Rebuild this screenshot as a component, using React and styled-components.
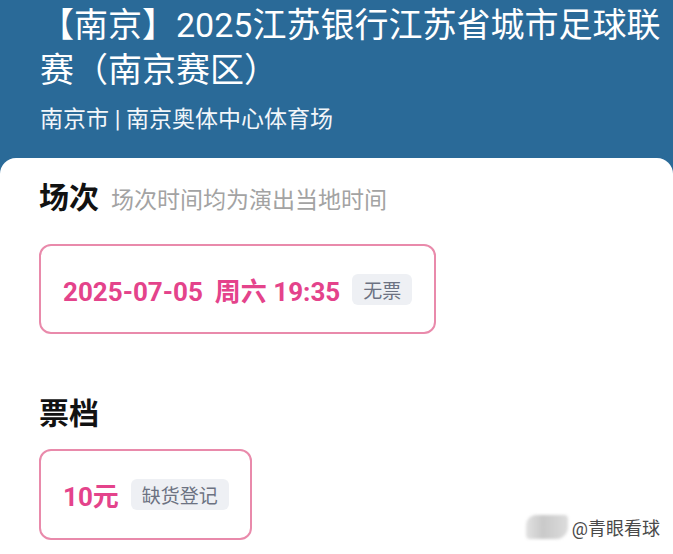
import React from "react"
import styled, { createGlobalStyle } from "styled-components"

const GlobalStyle = createGlobalStyle`
  html, body {
    margin: 0;
    padding: 0;
    background: #ffffff;
  }
  body {
    font-family: Roboto, "Noto Sans CJK SC", "Noto Sans", sans-serif;
  }
`

const Page = styled.div`
  position: relative;
  display: flex;
  flex-direction: column;
  min-height: 100vh;
  background: #2a6a98;
  overflow: hidden;
`

const Header = styled.header`
  padding: 3px 0 0 40px;
  color: #ffffff;
  height: 158px;
  box-sizing: border-box;
`

const Title = styled.h1`
  margin: 0;
  font-size: 34px;
  line-height: 45px;
  font-weight: 400;
`

const Venue = styled.p`
  margin: 12px 0 0;
  font-size: 23px;
  line-height: 30px;
  color: #f2f6fa;
`

const Card = styled.main`
  flex: 1;
  background: #ffffff;
  border-radius: 16px 16px 0 0;
  padding: 20px 0 0 39px;
`

const SectionHead = styled.div`
  display: flex;
  align-items: baseline;
  gap: 12px;
  margin-top: ${(p) => p.$top || 0}px;
`

const HeadTitle = styled.h2`
  margin: 0;
  font-size: 30px;
  line-height: 40px;
  font-weight: 700;
  color: #121212;
`

const HeadNote = styled.span`
  font-size: 23px;
  color: #a3a3a3;
`

const Option = styled.div`
  box-sizing: border-box;
  display: flex;
  align-items: center;
  width: ${(p) => p.$width}px;
  height: ${(p) => p.$height}px;
  margin-top: ${(p) => p.$top}px;
  padding-left: 22px;
  border: 2px solid #e98aab;
  border-radius: 12px;
`

const Price = styled.span`
  font-size: 26px;
  font-weight: 700;
  color: #e4438b;
  white-space: nowrap;
`

const Gap = styled.span`
  margin-left: 12px;
`

const Tag = styled.span`
  margin-left: 12px;
  height: 31px;
  padding: 0 11px;
  display: inline-flex;
  align-items: center;
  background: #eef0f4;
  color: #6c7282;
  font-size: 19px;
  border-radius: 6px;
`

const Watermark = styled.div`
  position: absolute;
  right: 13px;
  bottom: 14px;
  display: flex;
  align-items: center;
  gap: 4px;
  font-size: 18px;
  color: #4a4a4a;
`

const Blur = styled.span`
  width: 42px;
  height: 24px;
  background: linear-gradient(90deg, #e2e2e2, #c9c9c9 40%, #dcdcdc);
  border-radius: 10px 4px 12px 4px;
  filter: blur(1.5px);
`

export default function App() {
  return (
    <Page>
      <GlobalStyle />
      <Header>
        <Title>【南京】2025江苏银行江苏省城市足球联赛（南京赛区）</Title>
        <Venue>南京市 | 南京奥体中心体育场</Venue>
      </Header>
      <Card>
        <SectionHead>
          <HeadTitle>场次</HeadTitle>
          <HeadNote>场次时间均为演出当地时间</HeadNote>
        </SectionHead>
        <Option $width={397} $height={90} $top={26}>
          <Price>
            2025-07-05<Gap>周六 19:35</Gap>
          </Price>
          <Tag>无票</Tag>
        </Option>
        <SectionHead $top={60}>
          <HeadTitle>票档</HeadTitle>
        </SectionHead>
        <Option $width={213} $height={91} $top={15}>
          <Price>10元</Price>
          <Tag>缺货登记</Tag>
        </Option>
      </Card>
      <Watermark>
        <Blur />
        <span>@青眼看球</span>
      </Watermark>
    </Page>
  )
}
